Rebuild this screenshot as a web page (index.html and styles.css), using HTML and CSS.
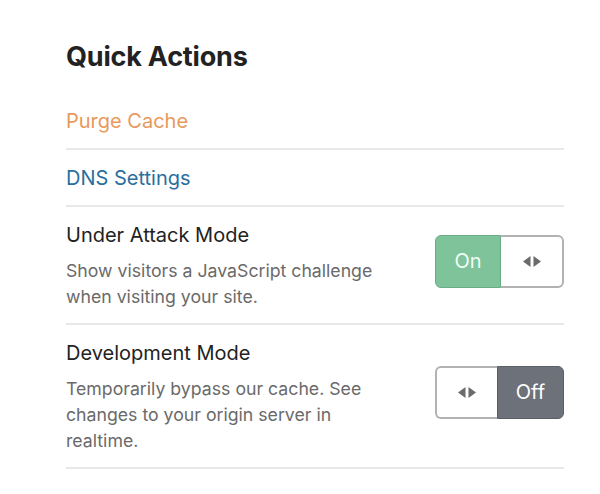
FILE: index.html
```html
<!DOCTYPE html>
<html>
<head>
<meta charset="utf-8">
<link rel="stylesheet" href="styles.css">
</head>
<body>
<div class="panel">
  <h2 class="title">Quick Actions</h2>
  <div class="row link-row link-row-first"><a class="link link-orange">Purge Cache</a></div>
  <div class="row link-row"><a class="link link-blue">DNS Settings</a></div>
  <div class="row setting">
    <div class="info">
      <div class="name">Under Attack Mode</div>
      <div class="desc">Show visitors a JavaScript challenge when visiting your site.</div>
    </div>
    <div class="toggle">
      <div class="seg seg-on">On</div>
      <div class="seg seg-handle seg-handle-right">
        <svg width="18" height="11" viewBox="0 0 18 11"><path d="M7.5 0 L0 5.5 L7.5 11 Z M10.5 0 L18 5.5 L10.5 11 Z" fill="#6b6b6b"/></svg>
      </div>
    </div>
  </div>
  <div class="row setting">
    <div class="info">
      <div class="name">Development Mode</div>
      <div class="desc">Temporarily bypass our cache. See changes to your origin server in realtime.</div>
    </div>
    <div class="toggle">
      <div class="seg seg-handle seg-handle-left">
        <svg width="18" height="11" viewBox="0 0 18 11"><path d="M7.5 0 L0 5.5 L7.5 11 Z M10.5 0 L18 5.5 L10.5 11 Z" fill="#6b6b6b"/></svg>
      </div>
      <div class="seg seg-off">Off</div>
    </div>
  </div>
</div>
</body>
</html>
```
FILE: styles.css
```css
html, body {
  margin: 0;
  padding: 0;
  background: #ffffff;
}
body {
  font-family: Inter, "Noto Sans", sans-serif;
  color: #222222;
}
.panel {
  width: 498px;
  padding: 40px 0 0 66px;
}
.title {
  margin: 0 0 35px 0;
  font-size: 27px;
  line-height: 34px;
  font-weight: 700;
  color: #222222;
  letter-spacing: -0.2px;
}
.row {
  border-bottom: 2px solid #e8e8e8;
}
.link-row {
  padding: 16px 0 14px 0;
  line-height: 25px;
  font-size: 20px;
}
.link-row-first {
  padding-top: 0;
}
.link-orange {
  color: #e8995b;
}
.link-blue {
  color: #2a6e9e;
}
.setting {
  display: flex;
  align-items: center;
  justify-content: space-between;
  padding: 16px 0 13px 0;
}
.info {
  width: 320px;
}
.name {
  font-size: 20px;
  line-height: 25px;
  color: #222222;
  margin-bottom: 10px;
}
.desc {
  font-size: 17.7px;
  line-height: 26px;
  color: #6a6a6a;
}
.toggle {
  display: flex;
  width: 129px;
  height: 53px;
  margin-top: -11px;
}
.seg {
  display: flex;
  align-items: center;
  justify-content: center;
  box-sizing: border-box;
  height: 53px;
  font-size: 20px;
}
.seg-on {
  width: 66px;
  background: #7ec39a;
  color: #f2fff6;
  border: 1px solid #6aae86;
  border-radius: 6px 0 0 6px;
}
.seg-off {
  width: 67px;
  background: #6d717a;
  color: #ffffff;
  border: 1px solid #5a5e66;
  border-radius: 0 6px 6px 0;
}
.seg-handle {
  width: 63px;
  background: #ffffff;
  border: 2px solid #b2b2b2;
}
.seg-handle-right {
  border-left: none;
  border-radius: 0 6px 6px 0;
}
.seg-handle-left {
  width: 62px;
  border-right: none;
  border-radius: 6px 0 0 6px;
}
```
